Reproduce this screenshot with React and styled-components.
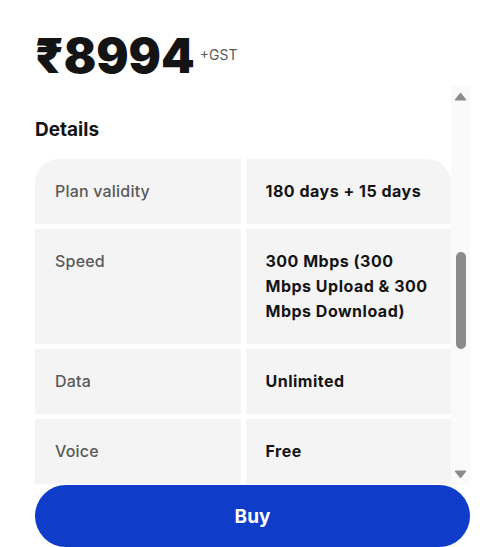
import React from 'react';
import styled, { createGlobalStyle } from 'styled-components';

const GlobalStyle = createGlobalStyle`
  html, body {
    margin: 0;
    padding: 0;
    background: #ffffff;
  }
  body {
    font-family: Inter, "Noto Sans", "Liberation Sans", sans-serif;
    color: #141414;
    -webkit-font-smoothing: antialiased;
  }
  * {
    box-sizing: border-box;
  }
`;

const Page = styled.div`
  width: 503px;
  height: 547px;
  overflow: hidden;
  padding: 0 33px 0 35px;
  display: flex;
  flex-direction: column;
`;

const PriceRow = styled.div`
  height: 86px;
  flex-shrink: 0;
  display: flex;
  align-items: flex-start;
  padding-top: 32px;
`;

const Price = styled.div`
  font-size: 48px;
  line-height: 48px;
  font-weight: 900;
  color: #141414;
`;

const Tax = styled.span`
  margin: 14px 0 0 5px;
  font-size: 14px;
  line-height: 18px;
  color: #595959;
`;

const Body = styled.div`
  height: 399px;
  flex-shrink: 0;
  display: flex;
`;

const Viewport = styled.div`
  flex: 1;
  min-width: 0;
  overflow: hidden;
`;

const Track = styled.div`
  width: 19px;
  flex-shrink: 0;
  background: #fafafa;
  display: flex;
  flex-direction: column;
  align-items: center;
`;

const ArrowBox = styled.div`
  height: 15px;
  display: flex;
  align-items: ${({ $down }) => ($down ? 'flex-start' : 'flex-end')};
  justify-content: center;
`;

const ThumbLane = styled.div`
  flex: 1;
  padding-top: ${({ $offset }) => $offset}px;
`;

const Thumb = styled.div`
  width: 10px;
  height: ${({ $size }) => $size}px;
  border-radius: 5px;
  background: #8b8b8b;
`;

const Section = styled.section`
  padding-top: 32px;
`;

const Heading = styled.h2`
  margin: 0 0 17px;
  font-size: 19px;
  line-height: 24px;
  font-weight: 700;
  color: #141414;
`;

const Table = styled.div`
  display: grid;
  grid-template-columns: 1fr 1fr;
  gap: 5px;
  border-radius: 24px 24px 0 0;
  overflow: hidden;
`;

const Cell = styled.div`
  background: #f4f4f4;
  padding: 20px;
  font-size: 16px;
  line-height: 25px;
  font-weight: ${({ $value }) => ($value ? 700 : 500)};
  letter-spacing: ${({ $value }) => ($value ? '0.5px' : '0.2px')};
  color: ${({ $value }) => ($value ? '#141414' : '#595959')};
`;

const BuyButton = styled.button`
  flex-shrink: 0;
  height: 62px;
  width: 100%;
  border: none;
  border-radius: 31px;
  background: #0f3cc9;
  color: #ffffff;
  font-family: inherit;
  font-size: 19px;
  font-weight: 700;
  cursor: pointer;
`;

const details = [
  ['Plan validity', '180 days + 15 days'],
  ['Speed', '300 Mbps (300 Mbps Upload & 300 Mbps Download)'],
  ['Data', 'Unlimited'],
  ['Voice', 'Free'],
];

function Arrow({ down }) {
  return (
    <svg width="13" height="9" viewBox="0 0 13 9">
      <path
        d={down ? 'M1 1 H12 L6.5 8 Z' : 'M1 8 H12 L6.5 1 Z'}
        fill="#8b8b8b"
        stroke="#8b8b8b"
        strokeWidth="1"
        strokeLinejoin="round"
      />
    </svg>
  );
}

function ScrollBar() {
  return (
    <Track>
      <ArrowBox>
        <Arrow />
      </ArrowBox>
      <ThumbLane $offset={151}>
        <Thumb $size={97} />
      </ThumbLane>
      <ArrowBox $down>
        <Arrow down />
      </ArrowBox>
    </Track>
  );
}

export default function App() {
  return (
    <>
      <GlobalStyle />
      <Page>
        <PriceRow>
          <Price>₹8994</Price>
          <Tax>+GST</Tax>
        </PriceRow>

        <Body>
          <Viewport>
            <Section>
              <Heading>Details</Heading>
              <Table>
                {details.map(([label, value]) => (
                  <React.Fragment key={label}>
                    <Cell>{label}</Cell>
                    <Cell $value>{value}</Cell>
                  </React.Fragment>
                ))}
              </Table>
            </Section>
          </Viewport>
          <ScrollBar />
        </Body>

        <BuyButton type="button">Buy</BuyButton>
      </Page>
    </>
  );
}
